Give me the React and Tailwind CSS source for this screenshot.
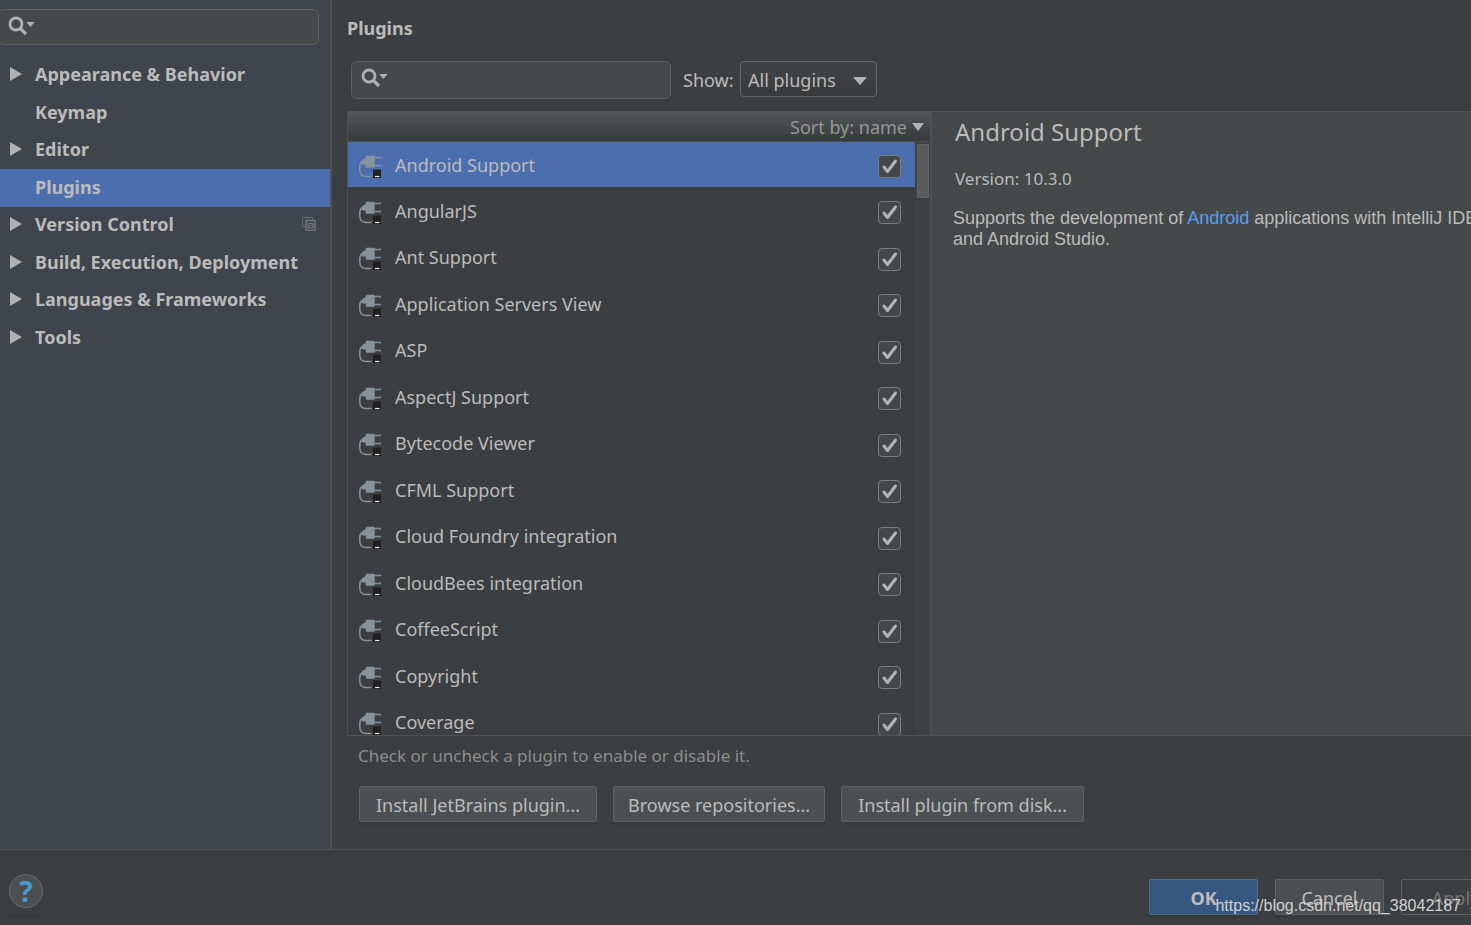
import { useState } from "react";

const categories = [
  { name: "Appearance & Behavior", expandable: true },
  { name: "Keymap" },
  { name: "Editor", expandable: true },
  { name: "Plugins" },
  { name: "Version Control", expandable: true, perProject: true },
  { name: "Build, Execution, Deployment", expandable: true },
  { name: "Languages & Frameworks", expandable: true },
  { name: "Tools", expandable: true },
];

const plugins = [
  "Android Support",
  "AngularJS",
  "Ant Support",
  "Application Servers View",
  "ASP",
  "AspectJ Support",
  "Bytecode Viewer",
  "CFML Support",
  "Cloud Foundry integration",
  "CloudBees integration",
  "CoffeeScript",
  "Copyright",
  "Coverage",
];

function SearchIcon({ className }) {
  return (
    <svg className={className} width="28" height="21" viewBox="0 0 28 21" fill="none" aria-hidden="true">
      <circle cx="8" cy="9" r="6" stroke="#afb1b3" strokeWidth="2.8" />
      <path d="M12.3 13.3l5.700 5.700" stroke="#afb1b3" strokeWidth="3.2" />
      <path d="M18.300 7h8.400l-4.200 5z" fill="#afb1b3" />
    </svg>
  );
}

function SearchBox({ label, className }) {
  return (
    <div className={`relative ${className}`}>
      <input type="text" aria-label={label}
        className="block w-full h-full bg-[#45494a] border border-[#5e6162] rounded-md pl-10 pr-2 text-lg focus:outline-none" />
      <SearchIcon className="absolute left-[10px] top-[6px] pointer-events-none" />
    </div>
  );
}

function PlugIcon() {
  return (
    <svg className="shrink-0" width="24" height="24" viewBox="0 1 24 24" fill="none" aria-hidden="true">
      <path d="M4.500 7.500C2.800 8.500 1.800 10 1.800 12.500V16C1.800 20 4 22.500 8 22.500h5.500" stroke="#87939a" strokeWidth="1.500" />
      <path d="M8 4.200C5.500 4.500 4 6 3.500 8l.7 2.500H8z" fill="#87939a" />
      <rect x="7.700" y="1.800" width="9" height="12" rx="1" fill="#87939a" />
      <path d="M16.500 3.500H23M16.500 11.500H23" stroke="#87939a" strokeWidth="1.300" />
      <rect x="15" y="15.500" width="8" height="8.500" fill="#231f20" />
      <path d="M17 22.500h4.500" stroke="#e8e8e8" strokeWidth="1.200" />
    </svg>
  );
}

function PluginRow({ name, selected }) {
  const [enabled, setEnabled] = useState(true);

  return (
    <li className={`h-[46px] even:h-[47px] first:h-[45px] shrink-0 ${selected ? "bg-[#4b6eaf]" : ""}`}>
      <label className="flex items-center h-full pl-[10px] pr-[14px] pt-[4px]">
        <PlugIcon />
        <span className="flex-1 ml-[13px] pb-[4px] text-lg">{name}</span>
        <span className="relative size-[23px]">
          <input type="checkbox" checked={enabled} onChange={(e) => setEnabled(e.target.checked)}
            className="block size-[23px] appearance-none bg-[#43494a] border border-[#7a7c7d] rounded-sm" />
          {enabled && (
            <svg className="absolute inset-0 pointer-events-none" width="23" height="23" viewBox="0 0 23 23" fill="none" aria-hidden="true">
              <path d="M6 12l3.500 4.500L17.500 6" stroke="#b4b4b4" strokeWidth="3" strokeLinecap="round" strokeLinejoin="round" />
            </svg>
          )}
        </span>
      </label>
    </li>
  );
}

function Sidebar() {
  return (
    <nav className="w-[332px] shrink-0 bg-[#40444c] border-r-2 border-[#505153]">
      <SearchBox label="Search settings" className="mt-[9px] -ml-[2px] w-[321px] h-9" />
      <ul className="mt-3">
        {categories.map((c) => (
          <li key={c.name} className="h-[37px] even:h-[38px]">
            <a href="#" className={`flex items-center h-full pl-[10px] pr-[14px] pb-[3px] text-lg font-bold ${c.name === "Plugins" ? "bg-[#4b6eaf]" : ""}`}>
              <span className="w-[25px]">
                {c.expandable && (
                  <svg width="12" height="14" viewBox="0 0 12 14" aria-hidden="true">
                    <path d="M0 0l12 7-12 7z" fill="#afb1b3" />
                  </svg>
                )}
              </span>
              <span className="flex-1">{c.name}</span>
              {c.perProject && (
                <svg width="14" height="14" viewBox="0 0 14 14" fill="none" stroke="#74787b" aria-hidden="true">
                  <path d="M3 9.500H.5v-9h10V3" stroke="#5f6f7a" />
                  <path d="M4 3.500h9v10H4z" strokeWidth="1.400" />
                  <path d="M6 6.500h5v4.500H6zM6 8.700h5" />
                </svg>
              )}
            </a>
          </li>
        ))}
      </ul>
    </nav>
  );
}

function PluginList() {
  return (
    <section className="w-[583px] shrink-0 flex flex-col border-l border-t border-[#515151]">
      <div className="h-[30px] shrink-0 flex items-center justify-end bg-linear-to-b from-[#53575a] to-[#383a3b] border-b border-[#4a4c4e]">
        <button type="button" className="flex items-center gap-[5px] pr-[6px] text-lg text-[#959697]">
          Sort by: name
          <svg width="12" height="9" viewBox="0 0 12 9" aria-hidden="true">
            <path d="M0 1h12L6 9z" fill="#b4b4b4" />
          </svg>
        </button>
      </div>
      <div className="flex-1 min-h-0 flex">
        <ul className="flex-1 flex flex-col overflow-hidden">
          {plugins.map((name, i) => (
            <PluginRow key={name} name={name} selected={i === 0} />
          ))}
        </ul>
        <div className="w-[15px] bg-[#3f4244] pl-[2px] pr-[1px] pt-[2px]">
          <div className="h-[54px] bg-[#595b5d] border border-[#616364]" />
        </div>
      </div>
    </section>
  );
}

function PluginDetails() {
  return (
    <section className="flex-1 min-w-0 overflow-hidden bg-[#45494a] border-l-2 border-t border-[#515151] pl-[23px] whitespace-nowrap">
      <h2 className="mt-1 text-2xl leading-8">Android Support</h2>
      <p className="mt-[19px] text-[17px] leading-6">Version: 10.3.0</p>
      <p className="-ml-[2px] mt-[17px] font-['Liberation_Sans',Arial,sans-serif] text-lg leading-[21px]">
        Supports the development of <a href="#" className="text-[#589df6]">Android</a> applications with IntelliJ IDEA
        <br />
        and Android Studio.
      </p>
    </section>
  );
}

const buttonStyle = "h-9 pt-[2px] rounded-xs border border-[#5e6162] bg-[#4c5052] text-lg shadow-[0_3px_0_#37393a]";

export default function App() {
  return (
    <div className="relative h-screen flex flex-col overflow-hidden bg-[#3c3f41] text-[#bbbbbb] font-['Noto_Sans',sans-serif]">
      <div className="flex-1 min-h-0 flex">
        <Sidebar />
        <main className="flex-1 min-w-0 flex flex-col pl-[15px]">
          <h1 className="mt-[14px] text-lg leading-7 font-bold">Plugins</h1>

          <div className="mt-[19px] ml-1 flex items-start">
            <SearchBox label="Search plugins" className="w-80 h-[38px]" />
            <label htmlFor="show" className="ml-3 w-[57px] pt-px text-lg leading-9">Show:</label>
            <div className="relative">
              <select id="show" defaultValue="all"
                className="w-[137px] h-9 appearance-none rounded-sm border border-[#646668] bg-linear-to-b from-[#414446] to-[#393b3d] pl-[7px] pt-[2px] text-lg leading-8 focus:outline-none">
                <option value="all">All plugins</option>
                <option value="enabled">Enabled</option>
                <option value="disabled">Disabled</option>
                <option value="bundled">Bundled</option>
                <option value="custom">Custom</option>
              </select>
              <svg className="absolute right-[10px] top-4 pointer-events-none" width="14" height="8" viewBox="0 0 14 8" aria-hidden="true">
                <path d="M0 0h14L7 8z" fill="#b4b4b4" />
              </svg>
            </div>
          </div>

          <div className="mt-3 flex-1 min-h-0 flex border-b border-[#515151]">
            <PluginList />
            <PluginDetails />
          </div>

          <p className="mt-2 ml-[11px] text-[17px] leading-6 text-[#8c8c8c]">
            Check or uncheck a plugin to enable or disable it.
          </p>
          <div className="mt-[18px] mb-[27px] ml-3 flex gap-4">
            <button type="button" className={`px-4 ${buttonStyle}`}>Install JetBrains plugin...</button>
            <button type="button" className={`px-[14px] ${buttonStyle}`}>Browse repositories...</button>
            <button type="button" className={`px-4 ${buttonStyle}`}>Install plugin from disk...</button>
          </div>
        </main>
      </div>

      <footer className="h-[76px] shrink-0 flex items-start justify-between border-t border-[#515151] pl-[9px]">
        <div className="mt-6 border-b-[3px] border-[#383a3b] pb-[7px]">
          <button type="button" aria-label="Help"
            className="block size-[34px] rounded-full border border-[#6a6d6f] bg-[#4c5052] text-[28px] leading-8 font-bold text-[#4a9ccb]">
            ?
          </button>
        </div>
        <div className="mt-[29px] -mr-[39px] flex gap-[17px]">
          <button type="button" className="w-[109px] h-9 pt-[2px] rounded-xs border border-[#4c708c] bg-[#365880] text-lg font-bold shadow-[0_3px_0_#37393a]">
            OK
          </button>
          <button type="button" className={`w-[109px] ${buttonStyle}`}>Cancel</button>
          <button type="button" disabled className="w-[109px] h-9 pt-[2px] rounded-xs border border-[#5e6162] text-lg text-[#777777]">
            Apply
          </button>
        </div>
      </footer>

      <span className="absolute right-[10px] bottom-[9px] font-['Liberation_Sans',Arial,sans-serif] text-base leading-5 text-[#d0d0d0] pointer-events-none">
        https://blog.csdn.net/qq_38042187
      </span>
    </div>
  );
}
